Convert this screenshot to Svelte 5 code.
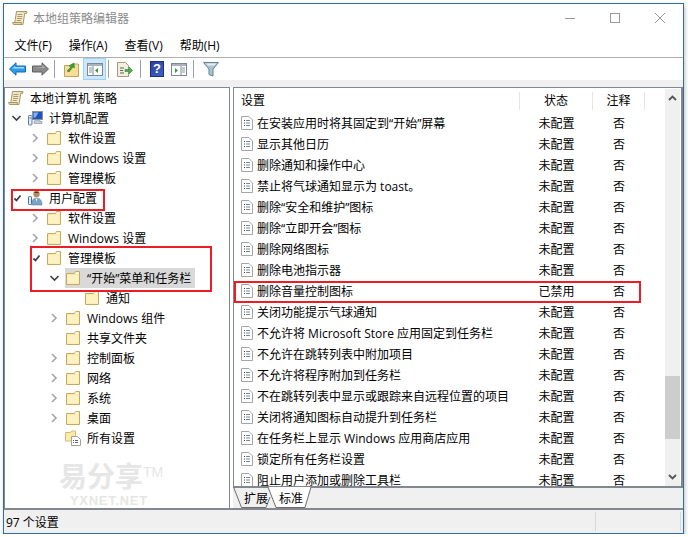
<script lang="ts">
	type TreeRow = {
		label: string;
		depth: number;
		caret?: 'right' | 'down' | 'tick';
		icon: 'scroll' | 'computer' | 'user' | 'folder' | 'allsettings';
		selected?: boolean;
	};

	const menus = ['文件(F)', '操作(A)', '查看(V)', '帮助(H)'];

	const tree: TreeRow[] = [
		{ label: '本地计算机 策略', depth: 0, icon: 'scroll' },
		{ label: '计算机配置', depth: 1, caret: 'down', icon: 'computer' },
		{ label: '软件设置', depth: 2, caret: 'right', icon: 'folder' },
		{ label: 'Windows 设置', depth: 2, caret: 'right', icon: 'folder' },
		{ label: '管理模板', depth: 2, caret: 'right', icon: 'folder' },
		{ label: '用户配置', depth: 1, caret: 'tick', icon: 'user' },
		{ label: '软件设置', depth: 2, caret: 'right', icon: 'folder' },
		{ label: 'Windows 设置', depth: 2, caret: 'right', icon: 'folder' },
		{ label: '管理模板', depth: 2, caret: 'tick', icon: 'folder' },
		{ label: '“开始”菜单和任务栏', depth: 3, caret: 'down', icon: 'folder', selected: true },
		{ label: '通知', depth: 4, icon: 'folder' },
		{ label: 'Windows 组件', depth: 3, caret: 'right', icon: 'folder' },
		{ label: '共享文件夹', depth: 3, icon: 'folder' },
		{ label: '控制面板', depth: 3, caret: 'right', icon: 'folder' },
		{ label: '网络', depth: 3, caret: 'right', icon: 'folder' },
		{ label: '系统', depth: 3, caret: 'right', icon: 'folder' },
		{ label: '桌面', depth: 3, caret: 'right', icon: 'folder' },
		{ label: '所有设置', depth: 3, icon: 'allsettings' }
	];

	const settings = [
		'在安装应用时将其固定到“开始”屏幕',
		'显示其他日历',
		'删除通知和操作中心',
		'禁止将气球通知显示为 toast。',
		'删除“安全和维护”图标',
		'删除“立即开会”图标',
		'删除网络图标',
		'删除电池指示器',
		'删除音量控制图标',
		'关闭功能提示气球通知',
		'不允许将 Microsoft Store 应用固定到任务栏',
		'不允许在跳转列表中附加项目',
		'不允许将程序附加到任务栏',
		'不在跳转列表中显示或跟踪来自远程位置的项目',
		'关闭将通知图标自动提升到任务栏',
		'在任务栏上显示 Windows 应用商店应用',
		'锁定所有任务栏设置',
		'阻止用户添加或删除工具栏'
	];

	const indent = (row: TreeRow) => (row.depth === 0 ? 3 : 5 + 19 * (row.depth - 1));
</script>

{#snippet scroll()}
	<svg width="16" height="16" viewBox="0 0 16 16">
		<path d="M4.500 1.500H13L11 14.500H2.500z" fill="#f3e8c8" stroke="#a89868" />
		<path d="M4.500 1.500h10.500l-.5 2H13" fill="#e7d8aa" stroke="#a89868" />
		<path d="M.5 12.500H9.500l-.5 2H1.500z" fill="#e7d8aa" stroke="#a89868" />
		<path d="M5.500 4.500h5M5.300 6.500h5M5 8.500h5M4.800 10.500h4" stroke="#a89a72" />
	</svg>
{/snippet}

{#snippet folder()}
	<svg width="16" height="16" viewBox="0 0 16 16">
		<path d="M1.500 3.500h8l1-2h4v13h-13z" fill="#fbeaa8" stroke="#c9a95e" />
		<path d="M2.500 5h11v8.500h-11z" fill="#fdf2c4" />
		<path d="M10.500 2.500h3v1.500h-3z" fill="#fff" />
	</svg>
{/snippet}

{#snippet docIcon()}
	<svg class="doc" width="12" height="14" viewBox="0 0 12 14">
		<path d="M.5.500h7.500l3.500 3.500v9.500h-11z" fill="#fff" stroke="#a5a5a5" />
		<path d="M3 4.500h1M3 7h1M3 9.500h1" stroke="#3c4a5c" />
		<path d="M5 4.500h4M5 7h4M5 9.500h4" stroke="#7b8794" />
	</svg>
{/snippet}

{#snippet treeIcon(kind: TreeRow['icon'])}
	{#if kind === 'scroll'}
		{@render scroll()}
	{:else if kind === 'folder'}
		{@render folder()}
	{:else if kind === 'computer'}
		<svg width="16" height="16" viewBox="0 0 16 16">
			<rect x="5.500" y="1.500" width="10" height="8" fill="#1f55b8" stroke="#8b93a0" />
			<path d="M6.500 2.500h5l-3 5h-2z" fill="#7fb2f0" />
			<path d="M8 10h5v1.500h2v2H7v-2h1z" fill="#c8ccd2" stroke="#8b93a0" stroke-width=".6" />
			<rect x="1.500" y="5.500" width="3.500" height="9.500" rx=".8" fill="#e6eaef" stroke="#5b7fa6" />
			<path d="M2.500 8h1.500" stroke="#2d6cb5" />
		</svg>
	{:else if kind === 'user'}
		<svg width="16" height="16" viewBox="0 0 16 16">
			<circle cx="9.500" cy="4" r="3.200" fill="#b78a5c" />
			<path d="M7 3c1-1.700 4-1.700 5 0z" fill="#4a3a2a" />
			<path d="M4.500 15c0-5 2-7 5-7s5.500 2 5.500 7z" fill="#7da3c8" stroke="#5c7f9f" stroke-width=".6" />
			<path d="M8.500 8.500l1 3 1-3z" fill="#fff" />
			<rect x="1.500" y="6.500" width="3" height="8" rx=".8" fill="#e6eaef" stroke="#42709f" />
		</svg>
	{:else}
		<svg width="18" height="16" viewBox="0 0 18 16">
			<path d="M.5 2.500h5l1-1.500h4v10h-10z" fill="#fbeaa8" stroke="#d3b976" />
			<path d="M6.500 6.500h6l3 3v6h-9z" fill="#fff" stroke="#a0a0a0" />
			<path d="M8 10.500h1M8 12.500h1M10 10.500h3M10 12.500h3" stroke="#59636f" />
		</svg>
	{/if}
{/snippet}

{#snippet caret(kind: TreeRow['caret'])}
	<svg class="caret" width="17" height="12" viewBox="0 0 17 12">
		{#if kind === 'right'}
			<path d="M4 2l4 4-4 4" fill="none" stroke="#a6a6a6" stroke-width="1.600" />
		{:else if kind === 'down'}
			<path d="M2.500 4l4 4 4-4" fill="none" stroke="#404040" stroke-width="1.600" />
		{:else if kind === 'tick'}
			<path d="M4.500 6.500l2 2 4-5" fill="none" stroke="#404040" stroke-width="1.800" />
		{/if}
	</svg>
{/snippet}

<div class="window">
	<header class="titlebar">
		{@render scroll()}
		<span class="title">本地组策略编辑器</span>
		<div class="controls">
			<svg width="12" height="12" viewBox="0 0 12 12"><path d="M1 6.500h10" stroke="#9a9a9a" /></svg>
			<svg width="12" height="12" viewBox="0 0 12 12"><rect x="1.500" y="1.500" width="9" height="9" fill="none" stroke="#9a9a9a" /></svg>
			<svg width="12" height="12" viewBox="0 0 12 12"><path d="M1 1l10 10M11 1L1 11" stroke="#9a9a9a" /></svg>
		</div>
	</header>

	<nav class="menubar">
		{#each menus as menu}
			<span>{menu}</span>
		{/each}
	</nav>

	<div class="toolbar">
		<svg class="t-back" width="17" height="14" viewBox="0 0 17 14">
			<path d="M.5 7L7 .8v3.200h9.500v6H7v3.200z" fill="#2d9be8" stroke="#1366b8" />
			<path d="M3 7l3-3v1h9v1.500H5z" fill="#9fdcff" />
		</svg>
		<svg class="t-fwd" width="17" height="14" viewBox="0 0 17 14">
			<path d="M16.500 7L10 .8v3.200H.5v6H10v3.200z" fill="#8a8a8a" stroke="#5f5f5f" />
			<path d="M2 5h8V3l3 3z" fill="#b8b8b8" />
		</svg>
		<i class="sep s1"></i>
		<svg class="t-up" width="15" height="15" viewBox="0 0 15 15">
			<path d="M.5 3.500h6l1-1.500h7v12.500H.5z" fill="#f9dd97" stroke="#c5a35a" />
			<path d="M3 9l4-4-2-1 5-3 .5 5-1.500-1-4 5z" fill="#3aa03a" stroke="#1e7a26" stroke-width=".5" />
		</svg>
		<div class="t-active">
			<svg width="16" height="13" viewBox="0 0 16 13">
				<rect x=".5" y=".5" width="15" height="12" fill="#fff" stroke="#7d8894" />
				<path d="M1 1h14v2H1z" fill="#a9b3bd" />
				<path d="M6 3v9" stroke="#7d8894" />
				<path d="M2 5h3M2 7h3M2 9h3" stroke="#8a949e" />
				<path d="M11 5v5L8 7.500z" fill="#2e9b3a" />
			</svg>
		</div>
		<i class="sep s2"></i>
		<svg class="t-export" width="16" height="15" viewBox="0 0 16 15">
			<path d="M.5.500h8l3 3v11H.5z" fill="#f4efdd" stroke="#a59b80" />
			<path d="M3 6h4M3 8.500h3M3 11h4" stroke="#5c6570" />
			<path d="M8 7.500h4V5l3.500 3.500L12 12V9.500H8z" fill="#4cb04c" stroke="#2c8a30" stroke-width=".6" />
		</svg>
		<i class="sep s3"></i>
		<div class="t-help">?</div>
		<svg class="t-show" width="16" height="13" viewBox="0 0 16 13">
			<rect x=".5" y=".5" width="15" height="12" fill="#fff" stroke="#7d8894" />
			<path d="M1 1h14v2H1z" fill="#a9b3bd" />
			<path d="M10 3v9" stroke="#7d8894" />
			<path d="M11 5h3M11 7h3M11 9h3" stroke="#8a949e" />
			<path d="M4 5v5l3-2.500z" fill="#2e9b3a" />
		</svg>
		<i class="sep s4"></i>
		<svg class="t-filter" width="16" height="15" viewBox="0 0 16 15">
			<path d="M.5.500h15L10 7v7l-4-1.500V7z" fill="#a8c4d6" stroke="#65808f" />
			<path d="M2.500 1.500h11L11 3.500H5z" fill="#e3edf3" />
		</svg>
	</div>

	<div class="strip"></div>

	<main class="panes">
		<section class="tree">
			{#each tree as row}
				<div class="node" style="padding-left: {indent(row)}px">
					{#if row.depth > 0}
						{@render caret(row.caret)}
					{/if}
					<span class="node-body" class:selected={row.selected}>
						<span class="node-icon">{@render treeIcon(row.icon)}</span>
						<span>{row.label}</span>
					</span>
				</div>
			{/each}
			<div class="watermark">
				<div class="wm-big">易分享<sup>TM</sup></div>
				<div class="wm-small">YXNET.NET</div>
			</div>
		</section>

		<section class="right">
			<div class="list">
				<div class="list-head">
					<span class="c-name">设置</span>
					<span class="c-state">状态</span>
					<span class="c-note">注释</span>
				</div>
				<div class="rows">
					{#each settings as name}
						<div class="row">
							<span class="c-name">{@render docIcon()}<span>{name}</span></span>
							<span class="c-state">{name === '删除音量控制图标' ? '已禁用' : '未配置'}</span>
							<span class="c-note">否</span>
						</div>
					{/each}
				</div>
				<div class="scrollbar">
					<svg width="15" height="14" viewBox="0 0 15 14"><path d="M4 9l3.500-3.500L11 9" fill="none" stroke="#555" stroke-width="1.800" /></svg>
					<div class="thumb"></div>
					<svg width="15" height="14" viewBox="0 0 15 14"><path d="M4 5l3.500 3.500L11 5" fill="none" stroke="#555" stroke-width="1.800" /></svg>
				</div>
			</div>
			<div class="tabs">
				<svg class="tab-shape" width="90" height="21" viewBox="0 0 90 21">
					<path d="M.5 0L8.500 20.500H33L37 10" fill="none" stroke="#6e6e6e" />
					<path d="M35 0l8 20.500h29L78 0" fill="#fff" stroke="#6e6e6e" />
				</svg>
				<span class="tab t1">扩展</span>
				<span class="tab t2">标准</span>
			</div>
		</section>
	</main>

	<footer class="status">
		<span class="status-text">97 个设置</span>
		<i class="status-div d1"></i>
		<i class="status-div d2"></i>
	</footer>

	<div class="mark m-user"></div>
	<div class="mark m-admin"></div>
	<div class="mark m-row"></div>
</div>

<style>
	:global(body) {
		margin: 0;
		background: #fff;
	}

	.window {
		position: relative;
		box-sizing: border-box;
		width: 681px;
		height: 531px;
		margin: 3px 0 0 3px;
		border: 1px solid #2f6f9f;
		box-shadow: 1px 2px 4px rgba(0, 0, 0, 0.25);
		display: flex;
		flex-direction: column;
		background: #fff;
		color: #000;
		font-family: 'Open Sans', 'Noto Sans CJK SC', sans-serif;
		font-size: 12px;
		overflow: hidden;
	}

	svg {
		display: block;
		flex: none;
	}

	.titlebar {
		height: 29px;
		box-sizing: border-box;
		padding: 0 17px 2px 8px;
		display: flex;
		align-items: center;
		flex: none;
	}

	.title {
		margin-left: 5px;
		color: #8c8c8c;
	}

	.controls {
		margin-left: auto;
		display: flex;
		gap: 33px;
	}

	.menubar {
		height: 24px;
		flex: none;
		display: flex;
		align-items: center;
		gap: 17px;
		padding-left: 10.5px;
		border-bottom: 1px solid #b0b0b0;
	}

	.toolbar {
		height: 22px;
		flex: none;
		display: flex;
		align-items: center;
	}

	.t-back {
		margin-left: 5px;
	}

	.t-fwd {
		margin-left: 6px;
	}

	.sep {
		width: 1px;
		height: 18px;
		background: #a0a0a0;
		flex: none;
	}

	.s1 {
		margin-left: 5px;
	}

	.t-up {
		margin-left: 9px;
	}

	.t-active {
		box-sizing: border-box;
		width: 23px;
		height: 22px;
		margin-left: 4px;
		margin-right: 2px;
		background: #cce8ff;
		border: 1px solid #99d1ff;
		display: flex;
		align-items: center;
		justify-content: center;
	}

	.s2 {
		margin-left: 0;
	}

	.t-export {
		margin-left: 8px;
	}

	.s3 {
		margin-left: 7px;
	}

	.t-help {
		width: 14px;
		height: 16px;
		margin-left: 9px;
		background: linear-gradient(135deg, #2b3f9e, #3f62c9);
		border: 1px solid #1e2d7a;
		box-sizing: border-box;
		color: #fff;
		font: bold 13px/14px 'Liberation Sans', sans-serif;
		text-align: center;
	}

	.t-show {
		margin-left: 7px;
	}

	.s4 {
		margin-left: 6px;
	}

	.t-filter {
		margin-left: 9px;
	}

	.strip {
		height: 7px;
		flex: none;
		background: #f0f0f0;
	}

	.panes {
		flex: 1;
		min-height: 0;
		display: flex;
		gap: 3px;
		border-bottom: 2px solid #828790;
	}

	.tree {
		position: relative;
		width: 226px;
		box-sizing: border-box;
		flex: none;
		border: 1px solid #828790;
		border-width: 1px 1px 0 1px;
		overflow: hidden;
	}

	.node {
		height: 20px;
		display: flex;
		align-items: center;
		white-space: nowrap;
	}

	.node-body {
		display: flex;
		align-items: center;
		gap: 6px;
		height: 20px;
	}

	.node-body.selected {
		background: #d9d9d9;
		padding-right: 4px;
	}

	.node-icon {
		width: 16px;
		flex: none;
	}

	.watermark {
		position: absolute;
		left: 54px;
		top: 374px;
		color: #e6e6e6;
		font-family: 'Liberation Sans', 'Noto Sans CJK SC', sans-serif;
	}

	.wm-big {
		font-size: 28px;
		line-height: 31px;
		height: 31px;
		font-weight: 700;
		white-space: nowrap;
	}

	.wm-big sup {
		font-size: 14px;
		font-weight: 400;
		vertical-align: 10px;
		line-height: 0;
	}

	.wm-small {
		margin: 1px 0 0 11px;
		font: bold 13px/14px 'Liberation Sans', sans-serif;
		letter-spacing: 0.7px;
	}

	.right {
		flex: 1;
		min-width: 0;
		display: flex;
		flex-direction: column;
	}

	.list {
		position: relative;
		flex: 1;
		min-height: 0;
		border: 1px solid #828790;
		border-width: 1px 2px 2px 1px;
		overflow: hidden;
	}

	.list-head {
		height: 24px;
		display: grid;
		grid-template-columns: 286px 73px 52px;
		align-items: center;
	}

	.list-head span {
		height: 18px;
		line-height: 18px;
		border-right: 1px solid #e5e5e5;
		box-sizing: border-box;
		margin-top: 1px;
	}

	.list-head .c-name {
		padding-left: 7px;
	}

	.rows {
		display: flex;
		flex-direction: column;
	}

	.row {
		height: 21px;
		flex: none;
		display: grid;
		grid-template-columns: 286px 73px 52px;
		align-items: center;
		white-space: nowrap;
	}

	.c-name {
		display: flex;
		align-items: center;
		gap: 4px;
		padding-left: 7px;
		overflow: hidden;
	}

	.c-state,
	.c-note {
		text-align: center;
	}

	.scrollbar {
		position: absolute;
		top: 1px;
		bottom: 0;
		right: 1px;
		width: 15px;
		background: #f0f0f0;
		display: flex;
		flex-direction: column;
		justify-content: space-between;
		padding-top: 2px;
		padding-bottom: 2px;
		box-sizing: border-box;
	}

	.thumb {
		position: absolute;
		top: 287px;
		left: 0;
		width: 15px;
		height: 63px;
		background: #cdcdcd;
	}

	.tabs {
		position: relative;
		height: 20px;
		flex: none;
		background: #f0f0f0;
		display: flex;
		align-items: center;
	}

	.tab-shape {
		position: absolute;
		left: 0;
		top: -1px;
	}

	.tab {
		position: relative;
	}

	.t1 {
		margin-left: 11px;
	}

	.t2 {
		margin-left: 11px;
	}

	.status {
		position: relative;
		height: 23px;
		flex: none;
		background: #f0f0f0;
		display: flex;
		align-items: center;
		padding-left: 2px;
	}

	.status-div {
		position: absolute;
		top: 2px;
		bottom: 2px;
		width: 1px;
		background: #d8d8d8;
	}

	.d1 {
		left: 591px;
	}

	.d2 {
		left: 676px;
	}

	.mark {
		position: absolute;
		box-sizing: border-box;
		border: 2px solid #ee1c25;
		pointer-events: none;
	}

	.m-user {
		left: 7px;
		top: 185px;
		width: 94px;
		height: 22px;
	}

	.m-admin {
		left: 26px;
		top: 242px;
		width: 182px;
		height: 46px;
	}

	.m-row {
		left: 230px;
		top: 277px;
		width: 407px;
		height: 22px;
	}
</style>
